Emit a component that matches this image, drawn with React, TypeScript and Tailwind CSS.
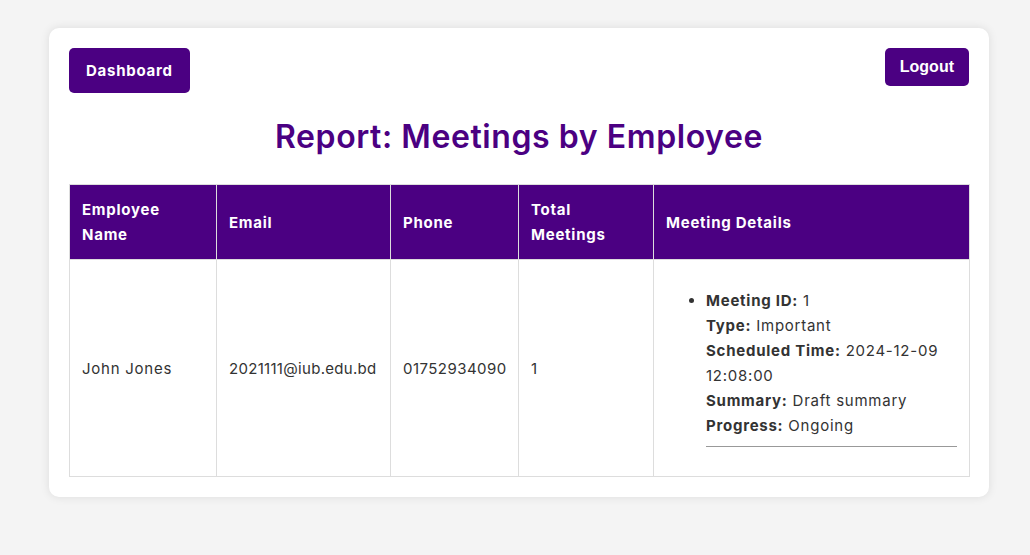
const details = [
  { label: 'Meeting ID:', value: '1' },
  { label: 'Type:', value: 'Important' },
  { label: 'Scheduled Time:', value: '2024-12-09 12:08:00' },
  { label: 'Summary:', value: 'Draft summary' },
  { label: 'Progress:', value: 'Ongoing' },
]

export default function App() {
  const th = "border border-[#ddd] bg-[#4b0082] p-[12px] text-left align-middle font-bold text-white"
  const td = "border border-[#ddd] p-[12px] align-middle text-[#333]"

  return (
    <div className="min-h-[555px] bg-[#f4f4f4] pt-[28px] font-['Inter',sans-serif] text-[15px] leading-[25px] tracking-[0.05em]">
      <div className="ml-[49px] w-[940px] rounded-[10px] bg-white p-[20px] shadow-[0_0_10px_rgba(0,0,0,0.1)]">
        <div className="flex items-start justify-between">
          <button className="rounded-[5px] bg-[#4b0082] px-[17px] py-[10px] font-bold text-white">Dashboard</button>
          <button className="rounded-[5px] bg-[#4b0082] px-[15px] py-[10px] font-['Liberation_Sans',sans-serif] text-[16px] leading-[18px] font-bold tracking-normal text-white">Logout</button>
        </div>

        <h2 className="mt-[20px] mb-[23px] text-center text-[32px] leading-[48px] font-semibold tracking-[0.018em] text-[#4b0082]">
          Report: Meetings by Employee
        </h2>

        <table className="w-[900px] table-fixed border-collapse border border-[#ddd]">
          <colgroup>
            <col className="w-[147px]" />
            <col className="w-[174px]" />
            <col className="w-[128px]" />
            <col className="w-[135px]" />
            <col className="w-[316px]" />
          </colgroup>
          <thead>
            <tr>
              <th className={th}>Employee Name</th>
              <th className={th}>Email</th>
              <th className={th}>Phone</th>
              <th className={th}>Total Meetings</th>
              <th className={th}>Meeting Details</th>
            </tr>
          </thead>
          <tbody>
            <tr>
              <td className={td}>John Jones</td>
              <td className={`${td} tracking-[0.02em]`}>2021111@iub.edu.bd</td>
              <td className={`${td} tracking-[0.03em]`}>01752934090</td>
              <td className={td}>1</td>
              <td className={td}>
                <ul className="mt-[16px] mb-[17px] list-disc pl-[40px]">
                  <li>
                    {details.map(d => (
                      <div key={d.label}>
                        <strong className="font-bold">{d.label}</strong> {d.value}
                      </div>
                    ))}
                    <hr className="mt-[8px] border-t border-[#999]" />
                  </li>
                </ul>
              </td>
            </tr>
          </tbody>
        </table>
      </div>
    </div>
  )
}
